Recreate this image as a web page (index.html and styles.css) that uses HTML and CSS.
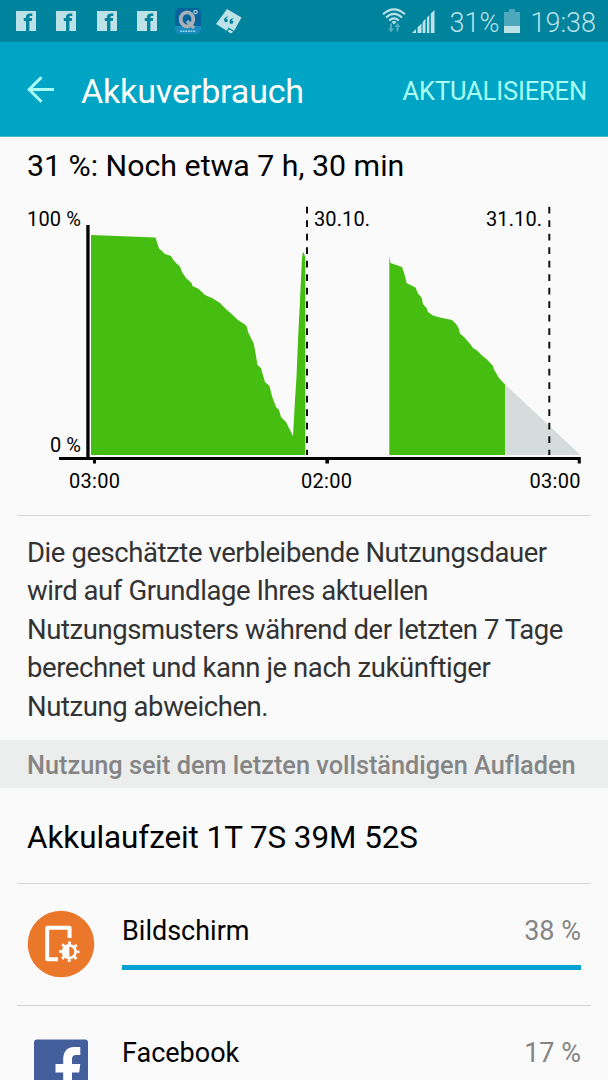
FILE: index.html
```html
<!DOCTYPE html>
<html lang="de">
<head>
  <meta charset="UTF-8" />
  <meta name="viewport" content="width=device-width, initial-scale=1" />
  <title>Akkuverbrauch</title>
  <link rel="stylesheet" href="styles.css">
</head>
<body>

<svg width="0" height="0" class="defs">
  <symbol id="fb" viewBox="0 0 20 20">
    <path d="M0 0H20V20H13.400V10H15.800L16.200 7H13.400V6.300C13.400 5.300 13.800 5 14.600 5H16.300V2.400H14C11.300 2.400 10 3.800 10 6V7H7.800V10H10V20H0Z"/>
  </symbol>
</svg>

<div class="status-bar">
  <div class="notifications">
    <svg class="fb-small"><use href="#fb"/></svg>
    <svg class="fb-small"><use href="#fb"/></svg>
    <svg class="fb-small"><use href="#fb"/></svg>
    <svg class="fb-small"><use href="#fb"/></svg>
    <svg class="q-icon" viewBox="0 0 26 26">
      <rect width="26" height="26" rx="5" fill="#07639b"/>
      <path d="M0 18H26V21Q26 26 21 26H5Q0 26 0 21Z" fill="#188bbb"/>
      <ellipse cx="12" cy="11.300" rx="6.300" ry="7" fill="none" stroke="#a5afb5" stroke-width="3.800"/>
      <path d="M12 13L19 20" stroke="#a5afb5" stroke-width="3.400"/>
      <circle cx="20.500" cy="4" r="1.700" fill="none" stroke="#a8ccd8" stroke-width="1.200"/>
      <path d="M5 23.200H21" stroke="#8ed2e8" stroke-width="1.600" stroke-dasharray="2 .6"/>
    </svg>
    <svg class="quote-icon" viewBox="0 0 26 25">
      <path d="M11 0L25.500 8.500L18 22L15 24.500L0 15Z" fill="#bce2e8"/>
      <path d="M12.500 7.500C9 7.500 7.600 10 8.400 12.200C9 13.800 11.800 13.400 11.800 11.500C11.800 10.300 11 9.900 10.300 10C10.400 9 11.200 8.300 12.500 7.500ZM18 9C14.500 9.200 13 11.800 13.800 14C14.500 15.500 17.200 15 17.200 13C17.200 11.900 16.500 11.500 15.800 11.500C16 10.300 17 9.500 18 9Z" fill="#00839d"/>
      <path d="M10.500 23.500L12.800 19.400L18 22.500" fill="none" stroke="#00839d" stroke-width="1.300"/>
    </svg>
  </div>
  <div class="system">
    <svg class="wifi" viewBox="0 0 24 26">
      <g fill="none" stroke="#bce2e8" stroke-width="2.100">
        <path d="M1 6.300Q12 -3.500 23 6.300"/>
        <path d="M4 9.500Q12 2.400 20 9.500"/>
        <path d="M7.200 12.500Q12 8.200 16.800 12.500"/>
      </g>
      <path d="M9.500 14Q12 12 14.500 14L12 16.500Z" fill="#bce2e8"/>
      <path d="M8 15.500H10V20.500H12L9 24.500L6 20.500H8ZM14.500 23.500V19H12.500L15.500 15L18.500 19H16.500V23.500Z" fill="#55aebf"/>
    </svg>
    <svg class="signal" viewBox="0 0 23 23">
      <path d="M0 23L4 19V23ZM5.500 17.500L9.500 13.500V23H5.500ZM10.600 12.300L13.500 8.500V23H10.600ZM15 7.500L17.300 5V23H15ZM18.800 3.500L22.500 0V23H18.800Z" fill="#bce2e8"/>
    </svg>
    <span class="percent">31%</span>
    <svg class="battery" viewBox="0 0 16 24">
      <path d="M0 3H5V0H11V3H16V24H0Z" fill="#4ca8ba"/>
      <path d="M0 17H16V24H0Z" fill="#bce2e8"/>
    </svg>
    <span class="clock">19:38</span>
  </div>
</div>

<div class="app-bar">
  <svg class="back" viewBox="0 0 28 27">
    <path d="M27 13.500H2M14.500 1.200L2.200 13.500L14.500 25.800" fill="none" stroke="#a9fff4" stroke-width="3"/>
  </svg>
  <h1>Akkuverbrauch</h1>
  <span class="refresh">AKTUALISIEREN</span>
</div>

<h2 class="estimate">31 %: Noch etwa 7 h, 30 min</h2>

<svg class="chart" viewBox="0 0 608 310">
  <!-- battery level -->
  <g fill="#46be11">
    <path d="M91 265V45L155.500 47.500L159 58.500L162 61L165 64L171 66L173 69.500L176 73L180 76.500L182 82L186 88L191.500 93L192.500 96L198 98.500L201 101L205 105L212 108L220 113L227 120L230 122.500L238 130L245 134.500L247 137L248 142L253.500 153L255 160L257.500 175L261 178L262 182L265 192L269.500 196L272 206L276 217L279 220L281 227L286 232L293 246L295 210L296.500 187L298 150L300 110L302 68L303 61.500L305.300 67V265Z"/>
    <path d="M389.300 265V66L390.500 73L402 77L405 86L406.500 93L415.500 97.500L418 103.500L421.500 107.500L423 114L426.500 118L428 122L433 125.500L440 127.500L452 130L456 134L458.500 138L460 143.500L464 147L471 155L472.500 157.500L477 160.500L482 165.500L487 169.500L493 176L494 179.500L499 188L505 194.500V265Z"/>
  </g>
  <path d="M505 194.500L580.500 265H505Z" fill="#d5dcdb"/>
  <!-- days -->
  <path d="M307 16.700V265M549.300 16.700V265" stroke="#111" stroke-width="2" stroke-dasharray="6.700 6.800"/>
  <!-- axes -->
  <path d="M86.300 35H89.600V267H580.800V273.500H577.800V270H329V273.500H325.400V270H96V273.500H93V270H59V267H86.300Z"/>
  <g class="labels">
    <text x="27" y="35.600" textLength="54">100 %</text>
    <text x="50" y="262" textLength="31">0 %</text>
    <text x="314" y="35.600" textLength="56">30.10.</text>
    <text x="486" y="35.600" textLength="56">31.10.</text>
    <text x="69" y="297.600" textLength="51">03:00</text>
    <text x="301" y="297.600" textLength="51">02:00</text>
    <text x="529.500" y="297.600" textLength="51">03:00</text>
  </g>
</svg>

<p class="hint">Die geschätzte verbleibende Nutzungsdauer<br>wird auf Grundlage Ihres aktuellen<br>Nutzungsmusters während der letzten 7 Tage<br>berechnet und kann je nach zukünftiger<br>Nutzung abweichen.</p>

<div class="section">Nutzung seit dem letzten vollständigen Aufladen</div>

<div class="runtime">Akkulaufzeit 1T 7S 39M 52S</div>

<div class="item">
  <svg class="icon" viewBox="0 0 68 68">
    <circle cx="34" cy="34" r="33.300" fill="#eb772b"/>
    <path d="M42.600 28V17.700H20.200V49.300H31" fill="none" stroke="#fff" stroke-width="4" stroke-linejoin="round"/>
    <circle cx="42.300" cy="41.700" r="11.500" fill="#eb772b"/>
    <circle cx="42.300" cy="41.700" r="8.700" fill="none" stroke="#fff" stroke-width="3" stroke-dasharray="2.800 4.033" stroke-dashoffset="1.400"/>
    <circle cx="42.300" cy="41.700" r="6.300" fill="none" stroke="#fff" stroke-width="2.600"/>
    <path d="M42.300 35.400A6.300 6.300 0 0 0 42.300 48Z" fill="#fff"/>
  </svg>
  <div class="details">
    <div class="row"><span>Bildschirm</span><span class="value">38 %</span></div>
    <div class="bar"></div>
  </div>
</div>

<div class="item">
  <svg class="icon" viewBox="0 0 68 68">
    <rect x="7" y="7.500" width="54" height="54" rx="3" fill="#425f9c"/>
    <path d="M36.200 61.500V40.500H28.500V32H36.200V27.500C36.200 19.500 40.500 15 47 15H53.300V23H49C46 23 45 24.500 45 27.500V32H53.300L52.200 40.500H45V61.500Z" fill="#fff"/>
  </svg>
  <div class="details">
    <div class="row"><span>Facebook</span><span class="value">17 %</span></div>
  </div>
</div>

</body>
</html>
```

FILE: styles.css
```css
* {
  box-sizing: border-box;
}
body {
  margin: 0;
  height: 1080px;
  overflow: hidden;
  background: #fafafa;
  color: #000;
  font-family: Roboto, sans-serif;
  font-variant-ligatures: none;
}
svg {
  display: block;
  flex-shrink: 0;
}
.defs {
  display: none;
}
.status-bar {
  height: 42px;
  display: flex;
  justify-content: space-between;
  padding: 0 12px 0 15.500px;
  background: #00839d;
  color: #bce2e8;
}
.notifications, .system {
  display: flex;
}
.notifications {
  padding-top: 8px;
}
.fb-small {
  width: 20px;
  height: 20px;
  margin: 3px 20.500px 0 0;
  fill: #bce2e8;
}
.q-icon {
  width: 26px;
  height: 26px;
  margin-left: -2.500px;
}
.quote-icon {
  width: 26px;
  height: 25px;
  margin: 1px 0 0 14.500px;
}
.wifi {
  width: 24px;
  height: 26px;
  margin: 8px 6px 0 0;
}
.signal {
  width: 23px;
  height: 23px;
  margin: 10px 15px 0 0;
}
.percent, .clock {
  font-size: 27px;
  font-weight: 300;
  line-height: 46px;
}
.battery {
  width: 16px;
  height: 24px;
  margin: 9px 10px 0 5px;
}
.app-bar {
  height: 95px;
  display: flex;
  align-items: center;
  padding: 0 21px 0 27px;
  background: #00a5c5;
  border-bottom: 1px solid #40bad2;
}
.back {
  width: 28px;
  height: 27px;
}
h1 {
  flex: 1;
  margin: 3px 0 0 26px;
  color: #fff;
  font-size: 34px;
  font-weight: 400;
  letter-spacing: -0.150px;
}
.refresh {
  margin-top: 3px;
  color: #a9fff4;
  font-size: 25.500px;
  letter-spacing: -0.150px;
}
.estimate {
  height: 53px;
  margin: 0;
  padding-left: 27px;
  font-size: 30.300px;
  font-weight: 400;
  line-height: 57px;
}
.chart {
  width: 608px;
  height: 310px;
}
.labels {
  font-size: 20px;
}
.hint {
  height: 225px;
  margin: 15px 17px 0;
  padding: 18px 10px 0;
  border-top: 1px solid #d5d5d5;
  color: #333;
  font-size: 27.500px;
  letter-spacing: -0.430px;
  line-height: 38.400px;
  white-space: nowrap;
}
.section {
  height: 48px;
  padding-left: 27px;
  background: #eceeed;
  color: #858585;
  font-size: 25.300px;
  font-weight: 500;
  line-height: 51px;
  white-space: nowrap;
}
.runtime {
  height: 95px;
  padding-left: 27px;
  font-size: 31.400px;
  letter-spacing: -0.050px;
  line-height: 99px;
}
.item {
  height: 121.500px;
  display: flex;
  margin: 0 17px;
  padding: 26px 10px 0;
  border-top: 1px solid #d5d5d5;
}
.icon {
  width: 68px;
  height: 68px;
}
.details {
  flex: 1;
  margin-left: 27px;
}
.row {
  display: flex;
  justify-content: space-between;
  font-size: 27px;
  line-height: 42px;
}
.value {
  color: #858585;
}
.bar {
  height: 5px;
  margin-top: 13px;
  background: #06a2d3;
}
```
